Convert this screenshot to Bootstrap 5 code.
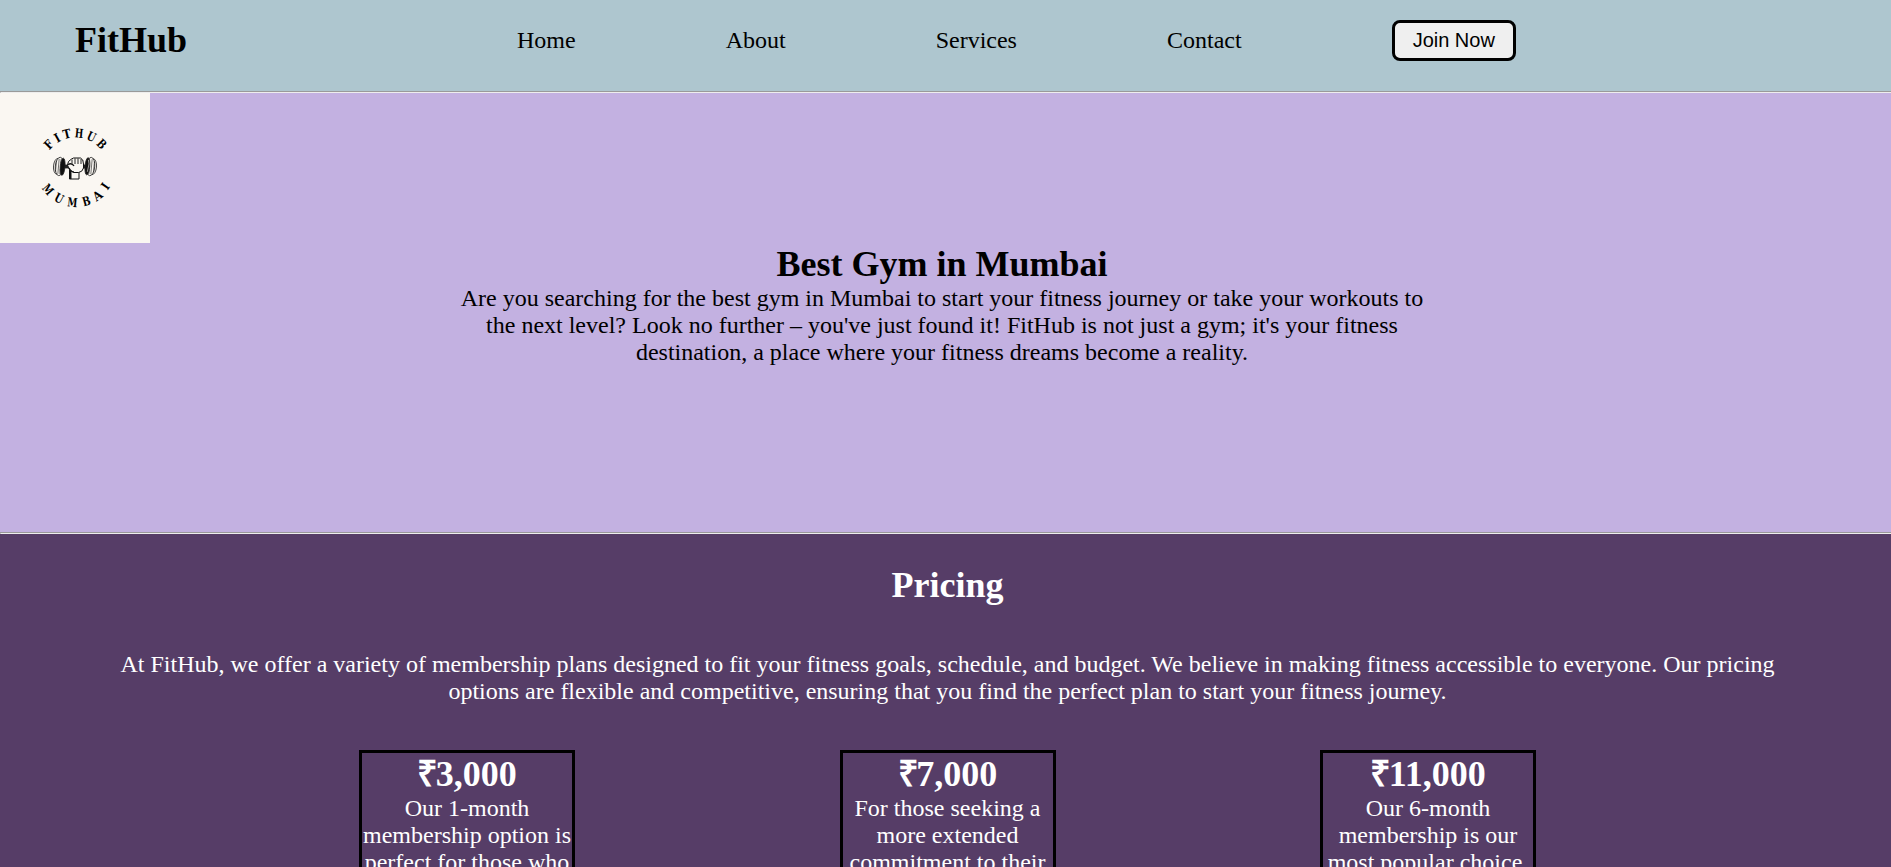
<!DOCTYPE html>
<html lang="en">
<head>
<meta charset="utf-8">
<meta name="viewport" content="width=device-width, initial-scale=1">
<title>FitHub</title>
<link href="https://cdn.jsdelivr.net/npm/bootstrap@5.3.0/dist/css/bootstrap.min.css" rel="stylesheet">
<style>
body{font-family:"Liberation Serif","Times New Roman",serif;font-size:24px;line-height:27px;color:#000;height:100vh;overflow:hidden}
h1,h2,h3{font-size:36px;font-weight:700;line-height:41px;margin:0}
p{margin:0}
.site-header{background:#aec6cf;height:91px;padding:20px 0 0 75px}
.brand{font-size:36px;line-height:41px;width:442px;color:#000}
.site-links{gap:150px}
.site-links a{color:#000;text-decoration:none}
.btn-join{font-family:"Liberation Sans",Arial,sans-serif;font-size:20px;line-height:23px;color:#000;background:#efefef;border:3px solid #000;border-radius:8px;padding:6px 18px;width:124px;height:41px;white-space:nowrap}
.rule{height:2px;border-top:1px solid #9a9a9a;border-bottom:1px solid #eee;border-left:1px solid #9a9a9a;background:none}
.hero{background:#c3b1e1;height:439px}
.logo{background:#faf7f2;width:150px;height:150px}
.logo-letters{font-family:"DejaVu Serif",serif;font-weight:700;font-size:12.5px}
.hero-copy{width:985px;margin-left:449.5px;padding-top:1px}
.pricing{background:#563d67;height:333px;padding-top:31px;overflow:hidden}
.pricing h2{padding-left:4px}
.intro{padding:45px 108px 0 112px}
.plans{gap:264.5px;margin:45px 0 0 359px}
.plan{width:216px;flex:none;border:3px solid #000;height:380px;padding-top:1px}
.rupee{letter-spacing:-2.5px}
</style>
</head>
<body>
<header class="site-header d-flex align-items-start">
  <div class="brand fw-bold flex-shrink-0">FitHub</div>
  <nav class="site-links d-flex align-items-center">
    <a href="#">Home</a><a href="#">About</a><a href="#">Services</a><a href="#">Contact</a>
    <button type="button" class="btn btn-join">Join Now</button>
  </nav>
</header>
<div class="rule"></div>
<main>
<section class="hero">
  <svg class="logo d-block" viewBox="0 0 150 150" role="img" aria-label="FitHub Mumbai">
    <g class="logo-letters" lengthAdjust="spacingAndGlyphs">
      <text x="71.500" y="44.500" textLength="7.500" lengthAdjust="spacingAndGlyphs" transform="rotate(-46 75.5 77)">F</text>
      <text x="73" y="44.500" textLength="5" lengthAdjust="spacingAndGlyphs" transform="rotate(-29.5 75.5 77)">I</text>
      <text x="71.500" y="44.500" textLength="8" lengthAdjust="spacingAndGlyphs" transform="rotate(-13.5 75.5 77)">T</text>
      <text x="71.300" y="44.500" textLength="8.400" lengthAdjust="spacingAndGlyphs" transform="rotate(5.5 75.5 77)">H</text>
      <text x="71.300" y="44.500" textLength="8.400" lengthAdjust="spacingAndGlyphs" transform="rotate(25.5 75.5 77)">U</text>
      <text x="71.500" y="44.500" textLength="8" lengthAdjust="spacingAndGlyphs" transform="rotate(45 75.5 77)">B</text>
      <text x="71" y="114" textLength="10" lengthAdjust="spacingAndGlyphs" transform="rotate(50 76 73)">M</text>
      <text x="71.800" y="114" textLength="8.400" lengthAdjust="spacingAndGlyphs" transform="rotate(27.8 76 73)">U</text>
      <text x="71" y="114" textLength="10" lengthAdjust="spacingAndGlyphs" transform="rotate(5.8 76 73)">M</text>
      <text x="72" y="114" textLength="8" lengthAdjust="spacingAndGlyphs" transform="rotate(-16.3 76 73)">B</text>
      <text x="71.500" y="114" textLength="9" lengthAdjust="spacingAndGlyphs" transform="rotate(-36.2 76 73)">A</text>
      <text x="73.500" y="113" textLength="5" lengthAdjust="spacingAndGlyphs" transform="rotate(-55.6 76 73)">I</text>
    </g>
    <!-- dumbbell -->
    <g fill="#faf7f2" stroke="#222" stroke-width=".8">
      <path d="M64 72h22v3H64z" fill="#222"/>
      <g transform="rotate(5 60 73.500)">
        <ellipse cx="57.500" cy="73.500" rx="4" ry="8"/>
        <ellipse cx="59.500" cy="73.500" rx="4.200" ry="9.200"/>
        <ellipse cx="62.600" cy="73.500" rx="2.400" ry="8.600" fill="#111"/>
        <path d="M56 68v11M58.500 66v15M60.500 66v4m0 6v5" stroke-width=".6"/>
      </g>
      <g transform="rotate(5 90 73.500)">
        <ellipse cx="92.500" cy="73.500" rx="4" ry="8"/>
        <ellipse cx="90.500" cy="73.500" rx="4.200" ry="9.200"/>
        <ellipse cx="87.400" cy="73.500" rx="2.400" ry="8.600" fill="#111"/>
        <path d="M94 68v11M91.500 66v15M89.500 77v4" stroke-width=".6"/>
        <path d="M87.800 67l1 4-1 8" fill="none" stroke="#faf7f2" stroke-width=".6"/>
      </g>
    </g>
    <!-- fist and wrist -->
    <g fill="#faf7f2" stroke="#111" stroke-width="1" stroke-linejoin="round">
      <path d="M69.500 77v9h9.500v-8z"/>
      <path d="M70.500 77v9" stroke-width="2"/>
      <path d="M67.500 72q0-4 4-6l2-1h7q3 1 3 6v4q-1 4-5 4.500h-5q-5-2-6-7.500z"/>
      <path d="M72 66.500v4m3-5v5.500m3-5.500v5.500m3-5v5" fill="none" stroke-width=".9"/>
      <path d="M68 71.500q4-2 6 1.500M69 75q2 4 5 4" fill="none" stroke-width="1.300"/>
    </g>
  </svg>
  <div class="hero-copy text-center">
    <h1>Best Gym in Mumbai</h1>
    <p>Are you searching for the best gym in Mumbai to start your fitness journey or take your workouts to the next level? Look no further – you've just found it! FitHub is not just a gym; it's your fitness destination, a place where your fitness dreams become a reality.</p>
  </div>
</section>
<div class="rule"></div>
<section class="pricing text-white text-center">
  <h2>Pricing</h2>
  <p class="intro">At FitHub, we offer a variety of membership plans designed to fit your fitness goals, schedule, and budget. We believe in making fitness accessible to everyone. Our pricing options are flexible and competitive, ensuring that you find the perfect plan to start your fitness journey.</p>
  <div class="plans d-flex">
    <article class="plan"><h3><span class="rupee">₹</span>3,000</h3><p>Our 1-month membership option is perfect for those who</p></article>
    <article class="plan"><h3><span class="rupee">₹</span>7,000</h3><p>For those seeking a more extended commitment to their</p></article>
    <article class="plan"><h3><span class="rupee">₹</span>11,000</h3><p>Our 6-month membership is our most popular choice,</p></article>
  </div>
</section>
</main>
<script src="https://cdn.jsdelivr.net/npm/bootstrap@5.3.0/dist/js/bootstrap.bundle.min.js"></script>
</body>
</html>
